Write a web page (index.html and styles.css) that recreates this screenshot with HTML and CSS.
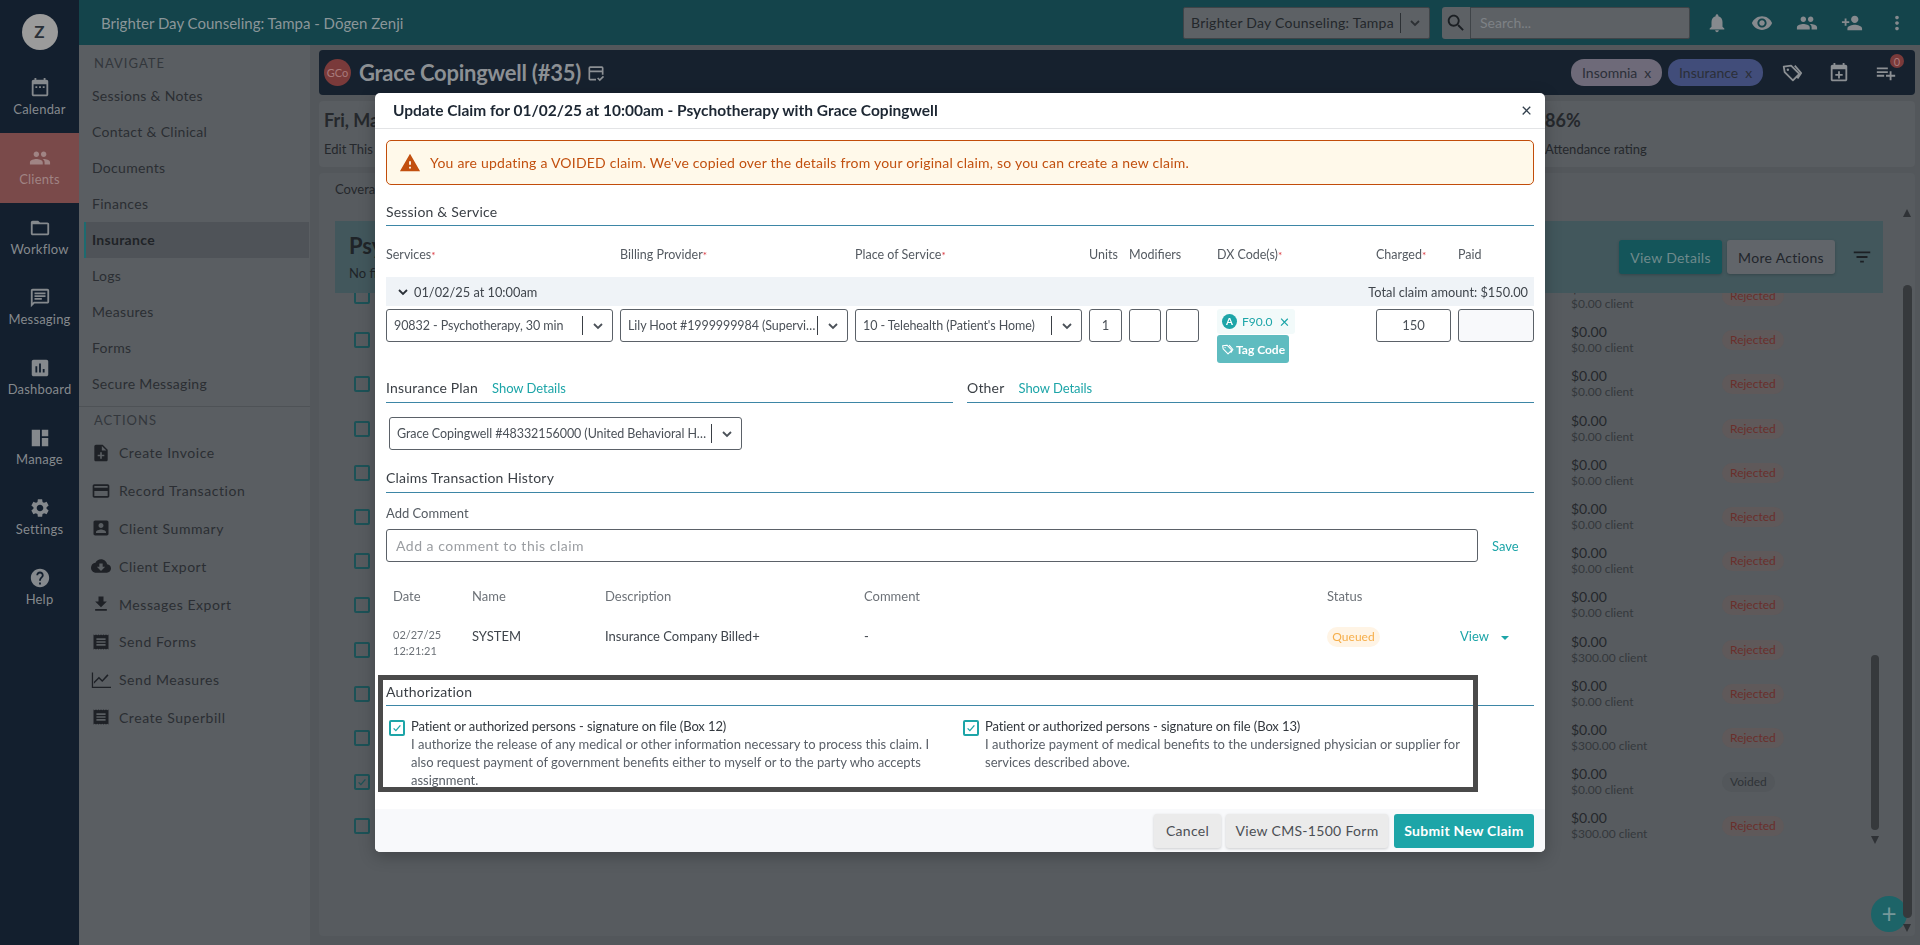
FILE: index.html
```html
<!DOCTYPE html>
<html lang="en">
<head>
    <meta charset="UTF-8">
    <meta name="viewport" content="width=device-width, initial-scale=1.0">
    <title>Update Claim</title>
    <link rel="stylesheet" href="styles.css">
</head>
<body>
    <!-- icon sprite -->
    <svg class="sprite" xmlns="http://www.w3.org/2000/svg">
        <symbol id="i-calendar" viewBox="0 0 24 24"><path d="M19 3h-1V1h-2v2H8V1H6v2H5c-1.11 0-1.99.9-1.99 2L3 19c0 1.1.89 2 2 2h14c1.1 0 2-.9 2-2V5c0-1.1-.9-2-2-2zm0 16H5V8h14v11zM7 10h2v2H7zm4 0h2v2h-2zm4 0h2v2h-2z"/></symbol>
        <symbol id="i-people" viewBox="0 0 24 24"><path d="M16 11c1.66 0 2.99-1.34 2.99-3S17.66 5 16 5c-1.66 0-3 1.34-3 3s1.34 3 3 3zm-8 0c1.66 0 2.99-1.34 2.99-3S9.66 5 8 5C6.34 5 5 6.34 5 8s1.34 3 3 3zm0 2c-2.33 0-7 1.17-7 3.5V19h14v-2.5c0-2.33-4.67-3.5-7-3.5zm8 0c-.29 0-.62.02-.97.05 1.16.84 1.97 1.97 1.97 3.45V19h6v-2.5c0-2.33-4.67-3.5-7-3.5z"/></symbol>
        <symbol id="i-folder" viewBox="0 0 24 24"><path d="M20 6h-8l-2-2H4c-1.1 0-1.99.9-1.99 2L2 18c0 1.1.9 2 2 2h16c1.1 0 2-.9 2-2V8c0-1.1-.9-2-2-2zm0 12H4V8h16v10z"/></symbol>
        <symbol id="i-message" viewBox="0 0 24 24"><path d="M20 2H4c-1.1 0-1.99.9-1.99 2L2 22l4-4h14c1.1 0 2-.9 2-2V4c0-1.1-.9-2-2-2zm0 14H5.17L4 17.17V4h16v12zM6 12h8v2H6zm0-3h12v2H6zm0-3h12v2H6z"/></symbol>
        <symbol id="i-chart" viewBox="0 0 24 24"><path d="M19 3H5c-1.1 0-2 .9-2 2v14c0 1.1.9 2 2 2h14c1.1 0 2-.9 2-2V5c0-1.1-.9-2-2-2zM9 17H7v-7h2v7zm4 0h-2V7h2v10zm4 0h-2v-4h2v4z"/></symbol>
        <symbol id="i-dash" viewBox="0 0 24 24"><path d="M3 21h9V3H3zM14 3v7h7V3zM14 21h7v-9h-7z"/></symbol>
        <symbol id="i-gear" viewBox="0 0 24 24"><path d="M19.14 12.94c.04-.3.06-.61.06-.94 0-.32-.02-.64-.07-.94l2.03-1.58c.18-.14.23-.41.12-.61l-1.92-3.32c-.12-.22-.37-.29-.59-.22l-2.39.96c-.5-.38-1.03-.7-1.62-.94l-.36-2.54c-.04-.24-.24-.41-.48-.41h-3.84c-.24 0-.43.17-.47.41l-.36 2.54c-.59.24-1.13.57-1.62.94l-2.39-.96c-.22-.08-.47 0-.59.22L2.74 8.87c-.12.21-.08.47.12.61l2.03 1.58c-.05.3-.09.63-.09.94s.02.64.07.94l-2.03 1.58c-.18.14-.23.41-.12.61l1.92 3.32c.12.22.37.29.59.22l2.39-.96c.5.38 1.03.7 1.62.94l.36 2.54c.05.24.24.41.48.41h3.84c.24 0 .44-.17.47-.41l.36-2.54c.59-.24 1.13-.56 1.62-.94l2.39.96c.22.08.47 0 .59-.22l1.92-3.32c.12-.22.07-.47-.12-.61l-2.01-1.58zM12 15.6c-1.98 0-3.6-1.62-3.6-3.6s1.62-3.6 3.6-3.6 3.6 1.62 3.6 3.6-1.62 3.6-3.6 3.6z"/></symbol>
        <symbol id="i-help" viewBox="0 0 24 24"><path d="M12 2C6.48 2 2 6.48 2 12s4.48 10 10 10 10-4.48 10-10S17.52 2 12 2zm1 17h-2v-2h2v2zm2.07-7.75l-.9.92C13.45 12.9 13 13.5 13 15h-2v-.5c0-1.1.45-2.1 1.17-2.83l1.24-1.26c.37-.36.59-.86.59-1.41 0-1.1-.9-2-2-2s-2 .9-2 2H8c0-2.21 1.79-4 4-4s4 1.79 4 4c0 .88-.36 1.68-.93 2.25z"/></symbol>
        <symbol id="i-note" viewBox="0 0 24 24"><path d="M14 2H6c-1.1 0-1.99.9-1.99 2L4 20c0 1.1.89 2 1.99 2H18c1.1 0 2-.9 2-2V8l-6-6zm2 14h-3v3h-2v-3H8v-2h3v-3h2v3h3v2zm-3-7V3.5L18.5 9H13z"/></symbol>
        <symbol id="i-card" viewBox="0 0 24 24"><path d="M20 4H4c-1.11 0-1.99.89-1.99 2L2 18c0 1.11.89 2 2 2h16c1.11 0 2-.89 2-2V6c0-1.11-.89-2-2-2zm0 14H4v-6h16v6zm0-10H4V6h16v2z"/></symbol>
        <symbol id="i-account" viewBox="0 0 24 24"><path d="M3 5v14c0 1.1.89 2 2 2h14c1.1 0 2-.9 2-2V5c0-1.1-.9-2-2-2H5c-1.11 0-2 .9-2 2zm12 4c0 1.66-1.34 3-3 3s-3-1.34-3-3 1.34-3 3-3 3 1.34 3 3zm-9 8c0-2 4-3.1 6-3.1s6 1.1 6 3.1v1H6v-1z"/></symbol>
        <symbol id="i-cloud" viewBox="0 0 24 24"><path d="M19.35 10.04C18.67 6.59 15.64 4 12 4 9.11 4 6.6 5.64 5.35 8.04 2.34 8.36 0 10.91 0 14c0 3.31 2.69 6 6 6h13c2.76 0 5-2.24 5-5 0-2.64-2.05-4.78-4.65-4.96zM17 13l-5 5-5-5h3V9h4v4h3z"/></symbol>
        <symbol id="i-download" viewBox="0 0 24 24"><path d="M19 9h-4V3H9v6H5l7 7 7-7zM5 18v2h14v-2H5z"/></symbol>
        <symbol id="i-receipt" viewBox="0 0 24 24"><path fill-rule="evenodd" d="M3 3l1.5 1L6 3l1.5 1L9 3l1.5 1L12 3l1.5 1L15 3l1.5 1L18 3l1.5 1L21 3v18l-1.5-1-1.5 1-1.5-1-1.5 1-1.5-1-1.5 1-1.5-1L9 21l-1.5-1L6 21l-1.5-1L3 21zM6.5 7.5v2h11v-2zm0 3.5v2h11v-2zm0 3.5v2h11v-2z"/></symbol>
        <symbol id="i-line" viewBox="0 0 24 24"><path d="M3.5 16.5l6-6.01 4 4L21 6.5l-1.41-1.41-6.09 6.97-4-4L3.5 14z"/><path d="M1 3h1.5v17H24v1.5H1z"/></symbol>
        <symbol id="i-bell" viewBox="0 0 24 24"><path d="M12 22c1.1 0 2-.9 2-2h-4c0 1.1.9 2 2 2zm6-6v-5c0-3.07-1.63-5.64-4.5-6.32V4c0-.83-.67-1.5-1.5-1.5s-1.5.67-1.5 1.5v.68C7.64 5.36 6 7.92 6 11v5l-2 2v1h16v-1l-2-2z"/></symbol>
        <symbol id="i-eye" viewBox="0 0 24 24"><path d="M12 4.5C7 4.5 2.73 7.61 1 12c1.73 4.39 6 7.5 11 7.5s9.27-3.11 11-7.5c-1.73-4.39-6-7.5-11-7.5zM12 17c-2.76 0-5-2.24-5-5s2.24-5 5-5 5 2.24 5 5-2.24 5-5 5zm0-8c-1.66 0-3 1.34-3 3s1.34 3 3 3 3-1.34 3-3-1.34-3-3-3z"/></symbol>
        <symbol id="i-person-add" viewBox="0 0 24 24"><path d="M15 12c2.21 0 4-1.79 4-4s-1.79-4-4-4-4 1.79-4 4 1.79 4 4 4zm-9-2V7H4v3H1v2h3v3h2v-3h3v-2H6zm9 4c-2.67 0-8 1.34-8 4v2h16v-2c0-2.66-5.33-4-8-4z"/></symbol>
        <symbol id="i-more" viewBox="0 0 24 24"><path d="M12 8c1.1 0 2-.9 2-2s-.9-2-2-2-2 .9-2 2 .9 2 2 2zm0 2c-1.1 0-2 .9-2 2s.9 2 2 2 2-.9 2-2-.9-2-2-2zm0 6c-1.1 0-2 .9-2 2s.9 2 2 2 2-.9 2-2-.9-2-2-2z"/></symbol>
        <symbol id="i-search" viewBox="0 0 24 24"><path d="M15.5 14h-.79l-.28-.27C15.41 12.59 16 11.11 16 9.5 16 5.91 13.09 3 9.5 3S3 5.91 3 9.5 5.91 16 9.5 16c1.61 0 3.09-.59 4.23-1.57l.27.28v.79l5 4.99L20.49 19l-4.99-5zm-6 0C7.01 14 5 11.99 5 9.5S7.01 5 9.5 5 14 7.01 14 9.5 11.99 14 9.5 14z"/></symbol>
        <symbol id="i-warning" viewBox="0 0 24 24"><path d="M1 21h22L12 2 1 21zm12-3h-2v-2h2v2zm0-4h-2v-4h2v4z"/></symbol>
        <symbol id="i-filter" viewBox="0 0 24 24"><path d="M10 18h4v-2h-4v2zM3 6v2h18V6H3zm3 7h12v-2H6v2z"/></symbol>
        <symbol id="i-playlist" viewBox="0 0 24 24"><path d="M14 10H2v2h12v-2zm0-4H2v2h12V6zm4 8v-4h-2v4h-4v2h4v4h2v-4h4v-2h-4zM2 16h8v-2H2v2z"/></symbol>
        <symbol id="i-event-add" viewBox="0 0 24 24"><path d="M19 3h-1V1h-2v2H8V1H6v2H5c-1.11 0-2 .9-2 2v14c0 1.1.89 2 2 2h14c1.1 0 2-.9 2-2V5c0-1.1-.9-2-2-2zm0 16H5V8h14v11zm-8-9h2v3h3v2h-3v3h-2v-3H8v-2h3z"/></symbol>
        <symbol id="i-tag" viewBox="0 0 24 24"><path fill="none" stroke="currentColor" stroke-width="2" stroke-linejoin="round" d="M3 5l8-1 9 9-7 7-9-9zM15 4l7 8-4 6"/><circle cx="7.5" cy="8.5" r="1.3"/></symbol>
        <symbol id="i-form" viewBox="0 0 24 24"><path fill="none" stroke="currentColor" stroke-width="2" d="M20 14V6a1 1 0 0 0-1-1H5a1 1 0 0 0-1 1v13a1 1 0 0 0 1 1h7M4 10h16M14 18l2.5 2.5L21 16"/></symbol>
        <symbol id="i-chevron" viewBox="0 0 12 12"><path fill="none" stroke="currentColor" stroke-width="1.8" d="M2 4l4 4 4-4"/></symbol>
        <symbol id="i-check" viewBox="0 0 16 16"><path fill="none" stroke="currentColor" stroke-width="1.8" d="M3.5 8.5l3 3 6-7"/></symbol>
    </svg>

    <!-- colours below are the dimmed ones, the modal backdrop is baked in -->
    <div class="app">
        <!-- main icon rail -->
        <nav class="rail">
            <div class="rail_logo"><span>Z</span></div>
            <a class="rail_item"><svg><use href="#i-calendar"/></svg>Calendar</a>
            <a class="rail_item active"><svg><use href="#i-people"/></svg>Clients</a>
            <a class="rail_item"><svg><use href="#i-folder"/></svg>Workflow</a>
            <a class="rail_item"><svg><use href="#i-message"/></svg>Messaging</a>
            <a class="rail_item"><svg><use href="#i-chart"/></svg>Dashboard</a>
            <a class="rail_item"><svg><use href="#i-dash"/></svg>Manage</a>
            <a class="rail_item"><svg><use href="#i-gear"/></svg>Settings</a>
            <a class="rail_item"><svg><use href="#i-help"/></svg>Help</a>
        </nav>

        <div class="main">
            <header class="topbar">
                <div class="topbar_title">Brighter Day Counseling: Tampa - Dōgen Zenji</div>
                <div class="top_select">
                    <span class="top_select_text">Brighter Day Counseling: Tampa</span>
                    <svg><use href="#i-chevron"/></svg>
                </div>
                <div class="top_search">
                    <span class="top_search_btn"><svg><use href="#i-search"/></svg></span>
                    <span class="top_search_input">Search...</span>
                </div>
                <div class="top_icons">
                    <svg><use href="#i-bell"/></svg>
                    <svg><use href="#i-eye"/></svg>
                    <svg><use href="#i-people"/></svg>
                    <svg><use href="#i-person-add"/></svg>
                    <svg><use href="#i-more"/></svg>
                </div>
            </header>

            <div class="below">
                <!-- client sub navigation -->
                <aside class="subnav">
                    <div class="subnav_head">NAVIGATE</div>
                    <a class="subnav_link">Sessions &amp; Notes</a>
                    <a class="subnav_link">Contact &amp; Clinical</a>
                    <a class="subnav_link">Documents</a>
                    <a class="subnav_link">Finances</a>
                    <a class="subnav_link current">Insurance</a>
                    <a class="subnav_link">Logs</a>
                    <a class="subnav_link">Measures</a>
                    <a class="subnav_link">Forms</a>
                    <a class="subnav_link">Secure Messaging</a>
                    <div class="subnav_head actions">ACTIONS</div>
                    <a class="action_link"><svg><use href="#i-note"/></svg>Create Invoice</a>
                    <a class="action_link"><svg><use href="#i-card"/></svg>Record Transaction</a>
                    <a class="action_link"><svg><use href="#i-account"/></svg>Client Summary</a>
                    <a class="action_link"><svg><use href="#i-cloud"/></svg>Client Export</a>
                    <a class="action_link"><svg><use href="#i-download"/></svg>Messages Export</a>
                    <a class="action_link"><svg><use href="#i-receipt"/></svg>Send Forms</a>
                    <a class="action_link"><svg><use href="#i-line"/></svg>Send Measures</a>
                    <a class="action_link"><svg><use href="#i-receipt"/></svg>Create Superbill</a>
                </aside>

                <main class="content">
                    <div class="client_head">
                        <span class="avatar">GCo</span>
                        <span class="client_name">Grace Copingwell (#35)</span>
                        <svg class="client_form"><use href="#i-form"/></svg>
                        <span class="chip chip_gray">Insomnia <b>x</b></span>
                        <span class="chip chip_blue">Insurance <b>x</b></span>
                        <svg class="head_icon first"><use href="#i-tag"/></svg>
                        <svg class="head_icon"><use href="#i-event-add"/></svg>
                        <span class="head_badge_wrap">
                            <svg class="head_icon"><use href="#i-playlist"/></svg>
                            <span class="head_badge">0</span>
                        </span>
                    </div>

                    <div class="stat_card">
                        <div class="stat stat_left">
                            <div class="stat_big">Fri, Mar 7</div>
                            <div class="stat_small">Edit This Session</div>
                        </div>
                        <div class="stat">
                            <div class="stat_big">86%</div>
                            <div class="stat_small">Attendance rating</div>
                        </div>
                    </div>

                    <section class="panel">
                        <div class="panel_tab">Coverage</div>
                        <div class="plan_bar">
                            <div>
                                <div class="plan_name">Psychotherapy</div>
                                <div class="plan_sub">No filters</div>
                            </div>
                            <a class="btn btn_dark">View Details</a>
                            <a class="btn btn_dim">More Actions</a>
                            <svg class="plan_filter"><use href="#i-filter"/></svg>
                        </div>
                        <div class="claim_list">
                            <div class="claim_rows">
                                <div class="claim_row"><i class="dim_box"></i><span></span><div class="amount">$0.00<small>$0.00 client</small></div><span class="pill">Rejected</span></div>
                                <div class="claim_row"><i class="dim_box"></i><span></span><div class="amount">$0.00<small>$0.00 client</small></div><span class="pill">Rejected</span></div>
                                <div class="claim_row"><i class="dim_box"></i><span></span><div class="amount">$0.00<small>$0.00 client</small></div><span class="pill">Rejected</span></div>
                                <div class="claim_row"><i class="dim_box"></i><span></span><div class="amount">$0.00<small>$0.00 client</small></div><span class="pill">Rejected</span></div>
                                <div class="claim_row"><i class="dim_box"></i><span></span><div class="amount">$0.00<small>$0.00 client</small></div><span class="pill">Rejected</span></div>
                                <div class="claim_row"><i class="dim_box"></i><span></span><div class="amount">$0.00<small>$0.00 client</small></div><span class="pill">Rejected</span></div>
                                <div class="claim_row"><i class="dim_box"></i><span></span><div class="amount">$0.00<small>$0.00 client</small></div><span class="pill">Rejected</span></div>
                                <div class="claim_row"><i class="dim_box"></i><span></span><div class="amount">$0.00<small>$0.00 client</small></div><span class="pill">Rejected</span></div>
                                <div class="claim_row"><i class="dim_box"></i><span></span><div class="amount">$0.00<small>$300.00 client</small></div><span class="pill">Rejected</span></div>
                                <div class="claim_row"><i class="dim_box"></i><span></span><div class="amount">$0.00<small>$0.00 client</small></div><span class="pill">Rejected</span></div>
                                <div class="claim_row"><i class="dim_box"></i><span></span><div class="amount">$0.00<small>$300.00 client</small></div><span class="pill">Rejected</span></div>
                                <div class="claim_row"><i class="dim_box"><svg><use href="#i-check"/></svg></i><span></span><div class="amount">$0.00<small>$0.00 client</small></div><span class="pill pill_void">Voided</span></div>
                                <div class="claim_row"><i class="dim_box"></i><span></span><div class="amount">$0.00<small>$300.00 client</small></div><span class="pill">Rejected</span></div>
                            </div>
                        </div>
                        <!-- scrollbars and floating button lie over the list -->
                        <div class="scroll_up"></div>
                        <div class="thumb thumb_outer"></div>
                        <div class="scroll_down outer"></div>
                        <div class="thumb thumb_inner"></div>
                        <div class="scroll_down inner"></div>
                        <div class="fab">+</div>
                    </section>
                </main>
            </div>
        </div>
    </div>

    <!-- claim modal -->
    <div class="modal">
        <div class="modal_head">
            <h1>Update Claim for 01/02/25 at 10:00am - Psychotherapy with Grace Copingwell</h1>
            <span class="modal_close">×</span>
        </div>

        <div class="modal_body">
            <div class="alert">
                <svg><use href="#i-warning"/></svg>
                You are updating a VOIDED claim. We've copied over the details from your original claim, so you can create a new claim.
            </div>

            <div class="sec_title first">Session &amp; Service</div>

            <div class="svc_grid svc_labels">
                <label>Services<em>*</em></label>
                <label>Billing Provider<em>*</em></label>
                <label>Place of Service<em>*</em></label>
                <label>Units</label>
                <label>Modifiers</label>
                <label class="dx_col">DX Code(s)<em>*</em></label>
                <label>Charged<em>*</em></label>
                <label>Paid</label>
            </div>

            <div class="svc_group">
                <span class="svc_date"><svg><use href="#i-chevron"/></svg>01/02/25 at 10:00am</span>
                <span>Total claim amount: $150.00</span>
            </div>

            <div class="svc_grid svc_fields">
                <div class="select"><span class="select_text">90832 - Psychotherapy, 30 min</span><svg><use href="#i-chevron"/></svg></div>
                <div class="select"><span class="select_text">Lily Hoot #1999999984 (Supervising Provider)</span><svg><use href="#i-chevron"/></svg></div>
                <div class="select"><span class="select_text">10 - Telehealth (Patient's Home)</span><svg><use href="#i-chevron"/></svg></div>
                <div class="field center">1</div>
                <div class="mods"><div class="field"></div><div class="field"></div></div>
                <div class="dx_col">
                    <span class="dx_chip"><i>A</i>F90.0<b>×</b></span>
                    <a class="tag_btn"><svg><use href="#i-tag"/></svg>Tag Code</a>
                </div>
                <div class="field center">150</div>
                <div class="field muted"></div>
            </div>

            <div class="two_col">
                <div class="sec_title">Insurance Plan<a>Show Details</a></div>
                <div class="sec_title">Other<a>Show Details</a></div>
            </div>

            <div class="select plan_select"><span class="select_text">Grace Copingwell #48332156000 (United Behavioral Health - Optum)</span><svg><use href="#i-chevron"/></svg></div>

            <div class="sec_title history">Claims Transaction History</div>

            <div class="comment_label">Add Comment</div>
            <div class="comment_row">
                <div class="comment_input">Add a comment to this claim</div>
                <a class="link">Save</a>
            </div>

            <div class="tx_grid tx_head">
                <span>Date</span><span>Name</span><span>Description</span><span>Comment</span><span>Status</span>
            </div>
            <div class="tx_grid tx_row">
                <span class="tx_date">02/27/25<br>12:21:21</span>
                <span>SYSTEM</span>
                <span>Insurance Company Billed+</span>
                <span>-</span>
                <span><span class="queued">Queued</span></span>
                <span class="tx_view"><a class="link">View</a><i class="caret"></i></span>
            </div>

            <div class="sec_title auth">Authorization</div>
            <div class="auth_grid">
                <div class="auth_item">
                    <i class="check"><svg><use href="#i-check"/></svg></i>
                    <p><strong>Patient or authorized persons - signature on file (Box 12)</strong>I authorize the release of any medical or other information necessary to process this claim. I also request payment of government benefits either to myself or to the party who accepts assignment.</p>
                </div>
                <div class="auth_item">
                    <i class="check"><svg><use href="#i-check"/></svg></i>
                    <p><strong>Patient or authorized persons - signature on file (Box 13)</strong>I authorize payment of medical benefits to the undersigned physician or supplier for services described above.</p>
                </div>
            </div>
        </div>

        <div class="modal_foot">
            <a class="btn btn_light btn_cancel">Cancel</a>
            <a class="btn btn_light btn_cms">View CMS-1500 Form</a>
            <a class="btn btn_teal">Submit New Claim</a>
        </div>

        <!-- dark annotation frame round the authorization block -->
        <div class="highlight"></div>
    </div>
</body>
</html>
```

FILE: styles.css
```css
*{
    margin: 0;
    padding: 0;
    box-sizing: border-box;
}
html,body{
    height: 100%;
    overflow: hidden;
}
body{
    font-family: Lato, "Open Sans", "Liberation Sans", sans-serif;
    font-size: 13px;
    color: #333;
    background-color: #53575b;
}
a{
    text-decoration: none;
}
svg{
    fill: currentColor;
}
.sprite{
    display: none;
}
.app{
    display: flex;
    height: 945px;
}

/* main rail */
.rail{
    width: 79px;
    flex: none;
    background-color: #131f2e;
}
.rail_logo{
    height: 63px;
    display: flex;
    align-items: center;
    justify-content: center;
}
.rail_logo span{
    width: 36px;
    height: 36px;
    border-radius: 50%;
    background-color: #9b9b9b;
    color: #2a3038;
    font-size: 17px;
    font-weight: 700;
    display: flex;
    align-items: center;
    justify-content: center;
}
.rail_item{
    height: 70px;
    display: flex;
    flex-direction: column;
    align-items: center;
    padding-top: 14px;
    color: #85898d;
    font-size: 13px;
    line-height: 16px;
    letter-spacing: .2px;
}
.rail_item svg{
    width: 22px;
    height: 22px;
    margin-bottom: 2px;
}
.rail_item.active{
    background-color: #7a4a4a;
    color: #a08484;
}

/* right of the rail */
.main{
    flex: 1;
    display: flex;
    flex-direction: column;
    min-width: 0;
}
.topbar{
    height: 45px;
    flex: none;
    background-color: #14444b;
    display: flex;
    align-items: center;
    padding: 0 12px 0 22px;
    color: #8b9699;
}
.topbar_title{
    font-size: 15px;
    margin-right: auto;
}
.top_select{
    width: 247px;
    height: 32px;
    display: flex;
    align-items: center;
    background-color: #5d6165;
    border: 1px solid #3f4448;
    border-radius: 2px;
    color: #23272b;
    font-size: 14px;
    letter-spacing: .25px;
    padding-left: 7px;
    margin-right: 12px;
}
.top_select_text{
    flex: 1;
    white-space: nowrap;
    border-right: 1px solid #2c3034;
    line-height: 20px;
}
.top_select svg{
    width: 12px;
    height: 12px;
    margin: 0 8px;
    color: #2c3034;
}
.top_search{
    display: flex;
    height: 32px;
    margin-right: 16px;
}
.top_search_btn{
    width: 28px;
    background-color: #5d6165;
    border-radius: 3px 0 0 3px;
    display: flex;
    align-items: center;
    justify-content: center;
    color: #1b1f23;
}
.top_search_btn svg{
    width: 22px;
    height: 22px;
}
.top_search_input{
    width: 220px;
    background-color: #5d6165;
    border: 1px solid #3f4448;
    border-radius: 0 2px 2px 0;
    color: #7e8286;
    font-size: 14px;
    line-height: 30px;
    padding-left: 9px;
}
.top_icons{
    display: flex;
    gap: 23px;
    color: #868a8e;
}
.top_icons svg{
    width: 22px;
    height: 22px;
}
.below{
    flex: 1;
    display: flex;
    min-height: 0;
}

/* sub navigation */
.subnav{
    width: 231px;
    flex: none;
    background-color: #5a5e62;
    color: #2b2e33;
    padding-top: 9px;
    font-size: 14px;
    letter-spacing: .3px;
}
.subnav_head{
    height: 18px;
    line-height: 18px;
    font-size: 13px;
    padding-left: 15px;
    color: #33373c;
    letter-spacing: 1px;
}
.subnav_head.actions{
    height: 28px;
    line-height: 27px;
    margin-top: 4px;
    border-top: 1px solid #4e5256;
}
.subnav_link{
    display: block;
    height: 36px;
    line-height: 36px;
    margin: 0 1px 0 5px;
    padding-left: 6px;
    border-left: 2px solid transparent;
}
.subnav_link:nth-of-type(1){
    margin-top: 6px;
}
.subnav_link.current{
    background-color: #4f5358;
    border-left-color: #1d6b70;
    font-weight: 700;
    color: #202327;
}
.action_link{
    display: flex;
    align-items: center;
    height: 37.8px;
    padding-left: 12px;
    letter-spacing: .55px;
}
.action_link svg{
    width: 20px;
    height: 20px;
    margin-right: 8px;
    color: #1e2126;
}

/* client area */
.content{
    flex: 1;
    min-width: 0;
    display: flex;
    flex-direction: column;
    gap: 6px;
    padding: 5px 5px 9px 9px;
}
.client_head{
    height: 45px;
    flex: none;
    background-color: #16212e;
    border-radius: 4px;
    display: flex;
    align-items: center;
    padding-left: 5px;
    color: #8c9094;
}
.avatar{
    width: 27px;
    height: 27px;
    border-radius: 50%;
    background-color: #7a3a3a;
    color: #a87a7a;
    font-size: 11px;
    display: flex;
    align-items: center;
    justify-content: center;
    margin-right: 8px;
}
.client_name{
    font-size: 22px;
    font-weight: 700;
    letter-spacing: -.25px;
    color: #8c9094;
    white-space: nowrap;
}
.client_form{
    width: 20px;
    height: 20px;
    margin-left: 5px;
    margin-right: auto;
}
.chip{
    height: 27px;
    line-height: 27px;
    border-radius: 13px;
    color: #2b2f38;
    font-size: 14px;
    padding: 0 8px 0 11px;
    display: flex;
    gap: 7px;
}
.chip b{
    font-weight: 400;
}
.chip_gray{
    width: 91px;
    background-color: #6e6a79;
}
.chip_blue{
    width: 95px;
    margin-left: 6px;
    background-color: #414d7a;
}
.head_icon{
    width: 22px;
    height: 22px;
    margin-left: 25px;
}
.head_icon.first{
    margin-left: 18px;
}
.head_badge_wrap{
    position: relative;
    display: flex;
    margin-right: 18px;
}
.head_badge{
    position: absolute;
    top: -8px;
    right: -7px;
    width: 14px;
    height: 14px;
    line-height: 15px;
    text-align: center;
    border-radius: 50%;
    font-size: 11px;
    background-color: #7a3a3a;
    color: #a87a7a;
}
.stat_card{
    height: 66px;
    flex: none;
    background-color: #595d61;
    border-radius: 4px;
    display: flex;
    justify-content: space-between;
    padding: 7px 0 0 5px;
    color: #25282c;
}
.stat_left{
    width: 500px;
}
.stat{
    flex: none;
}
.stat:last-child{
    width: 370px;
}
.stat_big{
    font-size: 18px;
    font-weight: 700;
    line-height: 24px;
}
.stat_small{
    font-size: 13px;
    margin-top: 9px;
}
.panel{
    position: relative;
    flex: 1;
    min-height: 0;
    background-color: #575b5f;
    border-radius: 4px;
    padding: 0 32px 0 16px;
    overflow: hidden;
}
.panel_tab{
    height: 48px;
    line-height: 32px;
    color: #25282c;
    font-size: 13px;
}
.plan_bar{
    position: relative;
    z-index: 1;
    height: 72px;
    background-color: #42575c;
    display: flex;
    align-items: center;
    padding: 0 10px 0 14px;
    color: #1f2428;
}
.plan_bar > div{
    margin-right: auto;
}
.plan_name{
    font-size: 22px;
    font-weight: 700;
    line-height: 26px;
}
.plan_sub{
    margin-top: 6px;
    font-size: 13px;
}
.btn{
    display: flex;
    align-items: center;
    justify-content: center;
    border-radius: 3px;
    font-size: 14px;
    letter-spacing: .3px;
    height: 34px;
}
.btn_dark{
    width: 103px;
    background-color: #14555a;
    color: #6f8a8c;
    box-shadow: 0 1px 3px rgba(0,0,0,.2);
}
.btn_dim{
    width: 108px;
    margin-left: 5px;
    background-color: #61656a;
    color: #22262c;
    box-shadow: 0 1px 3px rgba(0,0,0,.2);
}
.plan_filter{
    width: 22px;
    height: 22px;
    margin-left: 16px;
    color: #1c2024;
}
.claim_list{
    height: 640px;
    overflow: hidden;
}
.claim_rows{
    margin-top: -19px;
}
.claim_row{
    height: 44.2px;
    display: grid;
    grid-template-columns: 16px 1201px 151px auto;
    align-items: center;
    padding-left: 19px;
}
.dim_box{
    width: 16px;
    height: 16px;
    border: 2px solid #1c5257;
    border-radius: 2px;
    display: block;
    color: #1c5257;
}
.dim_box svg{
    width: 12px;
    height: 12px;
    display: block;
}
.amount{
    font-size: 14px;
    line-height: 16px;
    color: #25282c;
}
.amount small{
    display: block;
    font-size: 12px;
    color: #34383c;
}
.pill{
    justify-self: start;
    height: 20px;
    line-height: 20px;
    padding: 0 8px;
    border-radius: 10px;
    background-color: #5f595a;
    color: #6a2f2c;
    font-size: 12px;
}
.pill_void{
    background-color: #53575b;
    color: #2f3337;
}
.thumb{
    position: absolute;
    z-index: 2;
    background-color: #36393c;
    border-radius: 5px;
}
.thumb_outer{
    left: 1584px;
    top: 112px;
    width: 9px;
    height: 633px;
}
.thumb_inner{
    left: 1552px;
    top: 482px;
    width: 8px;
    height: 175px;
}
.scroll_up,.scroll_down{
    position: absolute;
    z-index: 2;
    width: 0;
    height: 0;
    border-left: 4px solid transparent;
    border-right: 4px solid transparent;
}
.scroll_up{
    left: 1584px;
    top: 36px;
    border-bottom: 8px solid #2f3236;
}
.scroll_down{
    border-top: 8px solid #2f3236;
}
.scroll_down.outer{
    left: 1584px;
    top: 751px;
}
.scroll_down.inner{
    left: 1552px;
    top: 663px;
}
.fab{
    position: absolute;
    z-index: 1;
    left: 1552px;
    top: 723px;
    width: 36px;
    height: 36px;
    border-radius: 50%;
    background-color: #1d6468;
    color: #77989a;
    font-size: 26px;
    line-height: 35px;
    text-align: center;
}

/* modal */
.modal{
    position: fixed;
    z-index: 10;
    left: 375px;
    top: 93px;
    width: 1170px;
    height: 759px;
    display: flex;
    flex-direction: column;
    background-color: #fff;
    border-radius: 5px;
    box-shadow: 0 4px 16px rgba(0,0,0,.25);
    overflow: hidden;
}
.modal_head{
    height: 36px;
    flex: none;
    display: flex;
    align-items: center;
    justify-content: space-between;
    border-bottom: 1px solid #e3e4e6;
    padding: 0 13px 1px 18px;
}
.modal_head h1{
    font-size: 15.5px;
    font-weight: 700;
    color: #1d2733;
}
.modal_close{
    font-size: 19px;
    color: #33404d;
    line-height: 20px;
}
.modal_body{
    flex: 1;
    min-height: 0;
    padding: 11px 11px 0;
    overflow: hidden;
}
.alert{
    height: 45px;
    display: flex;
    align-items: center;
    gap: 9px;
    padding-left: 12px;
    background-color: #fff9ea;
    border: 1px solid #c24d0a;
    border-radius: 5px;
    color: #c2500f;
    font-size: 14px;
    letter-spacing: .22px;
}
.alert svg{
    width: 22px;
    height: 22px;
    flex: none;
}
.sec_title{
    display: flex;
    align-items: center;
    gap: 14px;
    height: 26px;
    padding-bottom: 3px;
    border-bottom: 1px solid #3d86a6;
    font-size: 14px;
    letter-spacing: .2px;
    color: #3a3f45;
}
.sec_title.first{
    margin-top: 15px;
}
.sec_title a{
    color: #1da5a8;
    font-size: 13px;
    letter-spacing: -.05px;
}
.svc_grid{
    display: grid;
    grid-template-columns: 227px 228px 227px 33px 70px 163px 75px 76px;
    column-gap: 7px;
}
.svc_labels{
    margin-top: 20px;
    height: 18px;
    line-height: 18px;
    color: #555b62;
    font-size: 12.5px;
}
.svc_labels em{
    color: #d9363e;
    font-style: normal;
    font-size: 10px;
    vertical-align: top;
}
.dx_col{
    padding-left: 11px;
}
.svc_group{
    margin-top: 13px;
    height: 29px;
    background-color: #eff3f7;
    display: flex;
    align-items: center;
    justify-content: space-between;
    padding: 0 6px 0 11px;
    color: #3f454c;
    font-size: 12.8px;
}
.svc_date{
    display: flex;
    align-items: center;
    gap: 5px;
}
.svc_date svg{
    width: 12px;
    height: 12px;
    color: #2a3038;
}
.svc_fields{
    margin-top: 3px;
    height: 54px;
    align-items: start;
}
.select{
    height: 33px;
    display: flex;
    align-items: center;
    border: 1px solid #5b6168;
    border-radius: 3px;
    padding-left: 7px;
    color: #4b5158;
    font-size: 12.5px;
    letter-spacing: -.08px;
    min-width: 0;
}
.select_text{
    flex: 1;
    min-width: 0;
    height: 19px;
    line-height: 19px;
    white-space: nowrap;
    overflow: hidden;
    text-overflow: ellipsis;
    border-right: 1px solid #3a3f45;
}
.select svg{
    flex: none;
    width: 12px;
    height: 12px;
    margin: 0 8px 0 9px;
    color: #4b5158;
}
.field{
    height: 33px;
    border: 1px solid #5b6168;
    border-radius: 3px;
    line-height: 31px;
    color: #4b5158;
    font-size: 13px;
}
.center{
    text-align: center;
}
.muted{
    background-color: #f8f9fb;
}
.mods{
    display: grid;
    grid-template-columns: 32px 33px;
    column-gap: 5px;
}
.dx_chip{
    display: inline-flex;
    align-items: center;
    width: 78px;
    height: 25px;
    padding-left: 5px;
    background-color: #f2fafa;
    border-radius: 3px;
    color: #1da5a8;
    font-size: 12px;
}
.dx_chip i{
    width: 15px;
    height: 15px;
    line-height: 15px;
    border-radius: 50%;
    background-color: #1da5a8;
    color: #fff;
    font-style: normal;
    font-size: 10px;
    font-weight: 700;
    text-align: center;
    margin-right: 5px;
}
.dx_chip b{
    font-weight: 400;
    font-size: 17px;
    line-height: 16px;
    margin-left: 7px;
}
.tag_btn{
    display: flex;
    align-items: center;
    justify-content: center;
    gap: 2px;
    width: 72px;
    height: 28px;
    margin-top: 1px;
    background-color: #5fbcc0;
    border-radius: 3px;
    color: #fff;
    font-size: 12px;
    font-weight: 700;
}
.tag_btn svg{
    width: 13px;
    height: 13px;
}
.two_col{
    margin-top: 13px;
    display: grid;
    grid-template-columns: 567px 567px;
    column-gap: 14px;
}
.two_col .sec_title{
    height: 27px;
}
.plan_select{
    width: 353px;
    margin: 14px 0 0 3px;
}
.sec_title.history{
    margin-top: 15px;
    height: 28px;
}
.comment_label{
    margin-top: 11px;
    height: 18px;
    line-height: 18px;
    color: #555b62;
}
.comment_row{
    margin-top: 7px;
    display: flex;
    align-items: center;
    gap: 14px;
}
.comment_input{
    width: 1092px;
    height: 33px;
    line-height: 31px;
    border: 1px solid #5b6168;
    border-radius: 3px;
    padding-left: 9px;
    color: #9a9da1;
    font-size: 14px;
    letter-spacing: .5px;
}
.link{
    color: #1da5a8;
    font-size: 13px;
}
.tx_grid{
    display: grid;
    grid-template-columns: 79px 133px 259px 463px 133px auto;
    padding-left: 7px;
}
.tx_head{
    margin-top: 25px;
    height: 18px;
    line-height: 18px;
    color: #6d7278;
}
.tx_row{
    margin-top: 22px;
    height: 32px;
    color: #3f454c;
    line-height: 18px;
}
.tx_date{
    font-size: 11px;
    line-height: 16px;
    color: #6d7278;
}
.queued{
    display: inline-block;
    width: 53px;
    height: 20px;
    line-height: 20px;
    border-radius: 10px;
    text-align: center;
    background-color: #fff4e5;
    color: #f6ae4a;
    font-size: 12px;
}
.tx_view{
    display: flex;
    align-items: center;
    gap: 12px;
    height: 18px;
}
.caret{
    width: 0;
    height: 0;
    margin-top: 3px;
    border-left: 4px solid transparent;
    border-right: 4px solid transparent;
    border-top: 4px solid #1da5a8;
}
.sec_title.auth{
    margin-top: 21px;
}
.auth_grid{
    margin-top: 11px;
    display: grid;
    grid-template-columns: 560px 500px;
    column-gap: 14px;
}
.auth_item{
    display: flex;
    gap: 6px;
    padding-left: 3px;
}
.auth_item p{
    font-size: 13px;
    line-height: 18px;
    color: #5a6068;
}
.auth_item strong{
    display: block;
    font-weight: 400;
    letter-spacing: -.1px;
    color: #33383e;
}
.check{
    flex: none;
    width: 16px;
    height: 16px;
    margin-top: 3px;
    border: 2px solid #1da5a8;
    border-radius: 2px;
    color: #1da5a8;
}
.check svg{
    display: block;
    width: 12px;
    height: 12px;
}
.modal_foot{
    height: 43px;
    flex: none;
    display: flex;
    align-items: center;
    justify-content: flex-end;
    gap: 5px;
    padding-right: 11px;
    background-color: #f8f9fb;
}
.btn_light{
    background-color: #ebebeb;
    color: #4b4f54;
    box-shadow: 0 1px 3px rgba(0,0,0,.18);
}
.btn_cancel{
    width: 67px;
}
.btn_cms{
    width: 162px;
}
.btn_teal{
    width: 140px;
    background-color: #1da5a8;
    color: #fff;
    font-weight: 700;
    margin-left: 1px;
}
.highlight{
    position: absolute;
    left: 3px;
    top: 582px;
    width: 1100px;
    height: 117px;
    border: 5px solid #4a4a4a;
    pointer-events: none;
}
```
